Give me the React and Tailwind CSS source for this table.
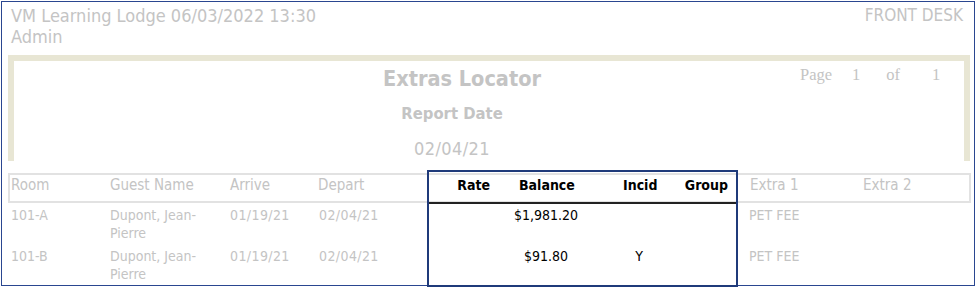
const FONT = { fontFamily: '"DejaVu Sans Condensed", "DejaVu Sans", sans-serif' };

const rows = [
  { room: '101-A', guest: 'Dupont, Jean-Pierre', arrive: '01/19/21', depart: '02/04/21', rate: '', balance: '$1,981.20', incid: '', group: '', extra1: 'PET FEE', extra2: '' },
  { room: '101-B', guest: 'Dupont, Jean-Pierre', arrive: '01/19/21', depart: '02/04/21', rate: '', balance: '$91.80', incid: 'Y', group: '', extra1: 'PET FEE', extra2: '' },
];

const cols = 'grid grid-cols-[98px_121px_88px_110px_72px_92px_80px_65px_114px_1fr]';

export default function App() {
  return (
    <div className="w-[979px] h-[288px] bg-white overflow-hidden" style={FONT}>
      <div className="relative ml-[1px] mt-[1px] w-[974px] h-[285px] border border-[#2a4690] text-[#c4c4c4]">
        <div className="flex justify-between h-[53px] pl-[9px] pr-[11px] pt-[3px] leading-[21px]">
          <div className="text-[18px]">
            <div>VM Learning Lodge 06/03/2022 13:30</div>
            <div>Admin</div>
          </div>
          <div className="text-[17px]">FRONT DESK</div>
        </div>

        <div className="relative ml-[6px] w-[962px] h-[106px] border-[6px] border-b-0 border-[#e8e6d4]">
          <div className="flex flex-col items-center pt-[5px] pr-[74px]">
            <div className="ml-[20px] text-[21.5px] leading-[26px] font-bold">Extras Locator</div>
            <div className="mt-[11px] text-[16.5px] leading-[22px] font-bold">Report Date</div>
            <div className="mt-[13px] text-[18px] leading-[22px] tracking-[0.4px]">02/04/21</div>
          </div>
          <div
            className="absolute top-[4px] left-[786px] flex text-[16.5px] leading-[20px]"
            style={{ fontFamily: '"Liberation Serif", serif' }}
          >
            <span>Page</span>
            <span className="ml-[20px]">1</span>
            <span className="ml-[26px]">of</span>
            <span className="ml-[32px]">1</span>
          </div>
        </div>

        <div className={`${cols} mt-[12px] ml-[6px] w-[963px] h-[30px] items-start border-2 border-[#e2e2e2] pl-[1px] pt-[1px] text-[15px] leading-[18px]`}>
          <div>Room</div>
          <div className="pl-[1px]">Guest Name</div>
          <div>Arrive</div>
          <div>Depart</div>
          <div className="text-right pr-[10px] text-[14px] font-bold text-black">Rate</div>
          <div className="pl-[19px] text-[14px] font-bold text-black">Balance</div>
          <div className="pl-[31px] text-[14px] font-bold text-black">Incid</div>
          <div className="text-right pr-[9px] text-[14px] font-bold text-black">Group</div>
          <div className="pl-[13px]">Extra 1</div>
          <div className="pl-[12px]">Extra 2</div>
        </div>

        {rows.map((r) => (
          <div key={r.room} className={`${cols} ml-[9px] pt-[3px] h-[41px] text-[14px] leading-[18px]`}>
            <div>{r.room}</div>
            <div className="pl-[1px] pr-[8px]">{r.guest}</div>
            <div className="tracking-[0.4px]">{r.arrive}</div>
            <div className="pl-[1px] tracking-[0.4px]">{r.depart}</div>
            <div className="text-right pr-[10px] text-black">{r.rate}</div>
            <div className="text-center text-black">{r.balance}</div>
            <div className="text-center pl-[14px] text-black">{r.incid}</div>
            <div className="text-right text-black">{r.group}</div>
            <div className="pl-[12px]">{r.extra1}</div>
            <div className="pl-[12px]">{r.extra2}</div>
          </div>
        ))}

        {/* highlight box over the money columns */}
        <div className="absolute left-[425px] top-[168px] w-[311px] h-[117px] border-2 border-[#1f3a7a]">
          <div className="mt-[30px] h-[2px] bg-[#222]" />
        </div>
      </div>
    </div>
  );
}
